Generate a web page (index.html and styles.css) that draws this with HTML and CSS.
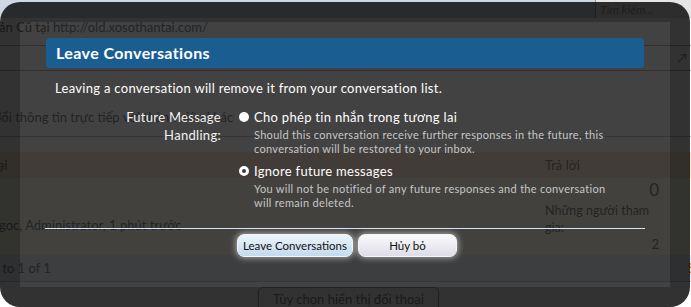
FILE: index.html
```html
<!DOCTYPE html>
<html lang="vi">
<head>
	<title>Leave Conversations</title>
	<meta charset="utf-8">
	<meta name="viewport" content="width=device-width, initial-scale=1">
<link rel="stylesheet" href="styles.css">
</head>

  <body>
    <!-- page behind the overlay -->
    <div class="page">
      <div class="navbar">
        <div class="search">Tìm kiếm...</div>
      </div>
      <div class="notice">Truy cập Phiên Bản Cũ tại <a href="#">http://old.xosothantai.com/</a></div>
      <div class="crumbs"><span class="popout">&#8599;</span></div>
      <div class="intro">Trao đổi thông tin trực tiếp với thành viên khác</div>
      <div class="list">
        <div class="list-head">
          <span class="col-title">Hội thoại</span>
          <span class="col-stats">Trả lời</span>
        </div>
        <div class="list-row">
          <div class="row-main">Quang Ngoc, <a href="#">Administrator</a>, <a href="#">1 phút trước</a></div>
          <div class="row-stats">
            <div class="stat-big">0</div>
            <div class="stat-label">Những người tham gia:</div>
            <div class="stat-num">2</div>
          </div>
        </div>
        <div class="list-foot">
          <span>Showing conversations 1 to 1 of 1</span>
          <span class="sel">S</span>
        </div>
      </div>
      <div class="tabs"><span class="tab">Tùy chọn hiển thị đối thoại</span></div>
    </div>

    <!-- overlay -->
    <div class="overlay">
      <h2 class="heading">Leave Conversations</h2>
      <p class="explain">Leaving a conversation will remove it from your conversation list.</p>

      <div class="ctrl">
        <div class="ctrl-label">Future Message Handling:</div>
        <ul class="choices">
          <li>
            <label class="choice"><span class="radio"></span>Cho phép tin nhắn trong tương lai</label>
            <p class="hint">Should this conversation receive further responses in the future, this conversation will be restored to your inbox.</p>
          </li>
          <li>
            <label class="choice"><span class="radio checked"></span>Ignore future messages</label>
            <p class="hint">You will not be notified of any future responses and the conversation will remain deleted.</p>
          </li>
        </ul>
      </div>

      <div class="submit">
        <button class="button primary">Leave Conversations</button>
        <button class="button">Hủy bỏ</button>
      </div>
    </div>
  </body>

</html>
```

FILE: styles.css
```css
* {
	box-sizing: border-box;
}

html, body {
	margin: 0;
}

body {
	width: 691px;
	height: 307px;
	overflow: hidden;
	position: relative;
	background: #fff;
	font-family: "Lato", "Liberation Sans", sans-serif;
}

/* ---- page behind ---- */

.page {
	color: #8a8a8a;
	font-size: 13px;
}

.page a {
	color: #7c8ea3;
	text-decoration: none;
}

.navbar {
	height: 18px;
	background: #cdd8e4;
	display: flex;
	justify-content: flex-end;
}

.search {
	width: 96px;
	height: 18px;
	background: #e6e6e6;
	border-left: 1px solid #999;
	padding: 2px 4px;
	font-size: 12px;
	font-style: italic;
	color: #999;
}

.notice {
	line-height: 18px;
	white-space: nowrap;
	text-indent: -96px;
	color: #777;
}

.crumbs {
	margin-top: 9px;
	height: 26px;
	border-top: 1px solid #bbb;
	border-bottom: 1px solid #bbb;
	display: flex;
	justify-content: flex-end;
	align-items: center;
	padding-right: 4px;
	color: #999;
}

.intro {
	margin-top: 37px;
	line-height: 18px;
	padding-bottom: 10px;
	border-bottom: 1px solid #ccc;
	white-space: nowrap;
	text-indent: -34px;
}

.list {
	margin-top: 15px;
}

.list-head {
	height: 26px;
	background: #fde8d6;
	display: flex;
	align-items: center;
	white-space: nowrap;
}

.list-head .col-title {
	width: 545px;
	text-indent: -45px;
}

.list-row {
	height: 77px;
	background: #fffcee;
	display: flex;
}

.row-main {
	width: 545px;
	padding-top: 38px;
	line-height: 18px;
	white-space: nowrap;
	text-indent: -52px;
}

.row-stats {
	width: 114px;
}

.stat-big {
	text-align: right;
	font-size: 17px;
	line-height: 24px;
}

.stat-label {
	width: 114px;
	font-size: 12.5px;
	line-height: 17px;
}

.stat-num {
	text-align: right;
	line-height: 16px;
}

.list-foot {
	height: 27px;
	background: #e9eef7;
	border-bottom: 1px solid #ccd;
	display: flex;
	align-items: center;
	justify-content: space-between;
	white-space: nowrap;
	text-indent: -143px;
}

.list-foot .sel {
	text-indent: 0;
	color: #e67d2a;
	margin-right: -4px;
}

.tabs {
	margin-top: 5px;
	padding-left: 258px;
}

.tab {
	display: inline-block;
	border: 1px solid #aaa;
	border-bottom: 0;
	border-radius: 5px 5px 0 0;
	padding: 3px 14px;
	color: #888;
}

/* ---- overlay ---- */

.overlay {
	position: absolute;
	left: 0;
	top: 2px;
	width: 690px;
	height: 305px;
	background: rgba(0,0,0,.74);
	border: 20px solid rgba(0,0,0,.25);
	border-radius: 20px;
	padding: 16px 26px 0;
	color: #fff;
	font-size: 13px;
	letter-spacing: .3px;
}

.heading {
	margin: 0;
	height: 30px;
	line-height: 30px;
	padding: 0 10px;
	background: #1a5e91;
	border-radius: 4px;
	font-size: 16px;
	font-weight: bold;
	letter-spacing: .4px;
}

.explain {
	margin: 11px 0 0 9px;
	line-height: 18px;
}

.ctrl {
	margin-top: 11px;
	display: grid;
	grid-template-columns: 175px 1fr;
	column-gap: 18px;
}

.ctrl-label {
	text-align: right;
	line-height: 18px;
	padding-left: 80px;
	color: #f2f2f2;
}

.choices {
	list-style: none;
	margin: 0;
	padding: 0;
}

.choices li + li {
	margin-top: 6px;
}

.choice {
	display: flex;
	align-items: center;
	line-height: 18px;
}

.radio {
	width: 10px;
	height: 10px;
	border-radius: 50%;
	background: #fff;
	margin-right: 5px;
}

.radio.checked {
	background: #3a3a3a;
	border: 3px solid #fff;
}

.hint {
	margin: 2px 0 0 15px;
	max-width: 354px;
	font-size: 11px;
	line-height: 14px;
	color: #c6c6c6;
}

.submit {
	margin: 18px -1px 0;
	border-top: 1px solid #cfe4f4;
	padding: 5px 0 0 192px;
	display: flex;
	gap: 5px;
}

.button {
	height: 23px;
	width: 99px;
	padding: 0;
	border: 1px solid #f4f4f8;
	border-radius: 7px;
	background: linear-gradient(#fafafc, #dedde8);
	box-shadow: 0 0 6px 1px rgba(255,255,255,.55);
	font-family: inherit;
	font-size: 11.5px;
	letter-spacing: 0;
	color: #111;
}

.button.primary {
	width: 116px;
	background: linear-gradient(#eef4fa, #c2dbee);
}
```
